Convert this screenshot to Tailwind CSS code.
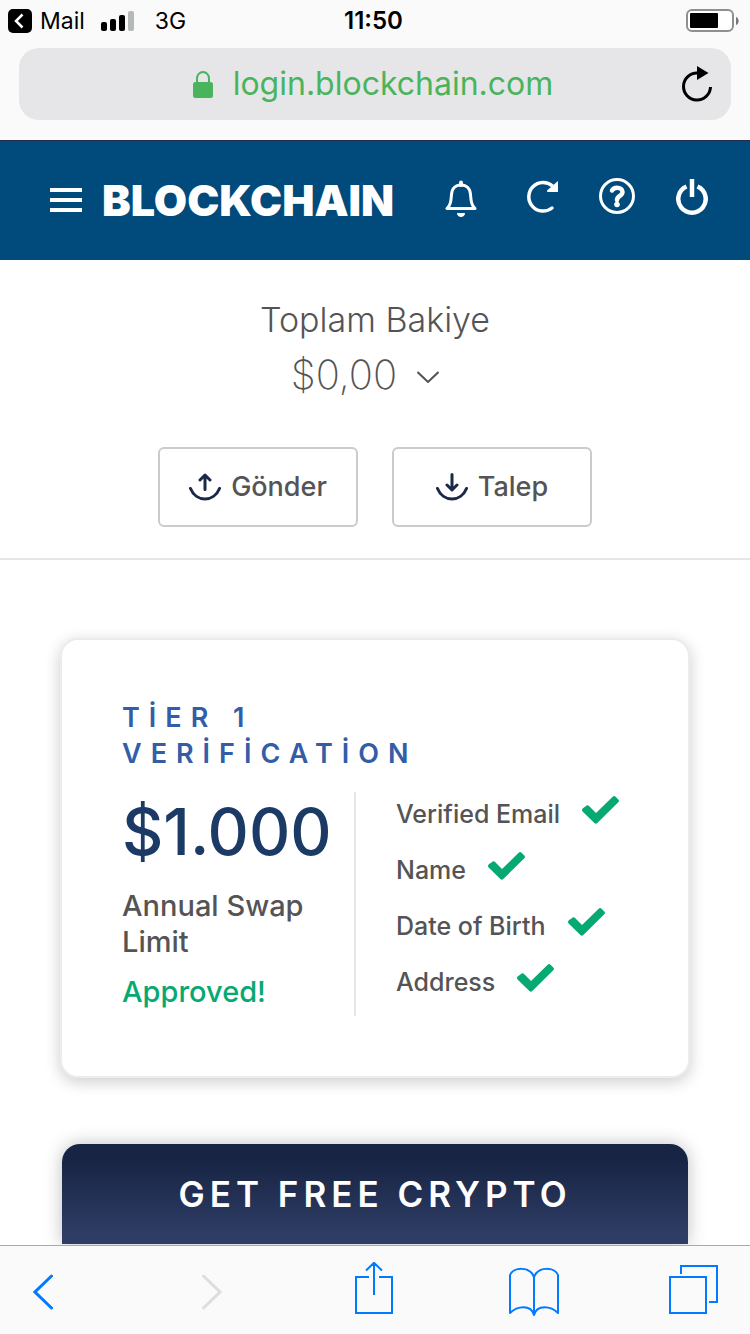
<!DOCTYPE html>
<html lang="tr">
  <head>
    <meta charset="utf-8" />
    <meta name="viewport" content="width=device-width, initial-scale=1" />
    <title>Blockchain Wallet</title>
    <script src="https://cdn.jsdelivr.net/npm/@tailwindcss/browser@4"></script>
  </head>
  <body class="flex flex-col min-h-screen bg-white text-[#545456] font-['Inter','Open_Sans',sans-serif]">
    <!-- Browser chrome -->
    <div class="bg-[#fafafa] text-black pb-5">
      <div class="grid grid-cols-3 items-center h-12 pb-1.5 pl-2 pr-[11px] text-[23px] leading-7">
        <div class="flex items-center">
          <svg class="w-6 h-6 mr-2" viewBox="0 0 24 24">
            <rect width="24" height="24" rx="5" />
            <path d="M14.5 5.5L8 12l6.500 6.500" fill="none" stroke="#fff" stroke-width="2.500" />
          </svg>
          <span>Mail</span>
          <svg class="w-[34px] h-5 ml-4 mr-5" viewBox="0 0 34 20">
            <rect x="0" y="11" width="6" height="9" rx="2" />
            <rect x="9" y="8" width="6" height="12" rx="2" />
            <rect x="18" y="4" width="6" height="16" rx="2" />
            <rect x="27" y="0" width="6" height="20" rx="2" fill="#b5b9b9" />
          </svg>
          <span>3G</span>
        </div>
        <span class="text-center text-2xl leading-7 font-semibold">11:50</span>
        <svg class="w-[53px] h-6 justify-self-end" viewBox="0 0 53 24">
          <rect x="1" y="1" width="46" height="21" rx="5" fill="#fff" stroke="#8e8e93" stroke-width="2" />
          <rect x="4" y="4" width="28" height="15" rx="1" />
          <path d="M50 8c3.500 1 3.500 7 0 8z" fill="#77777c" />
        </svg>
      </div>
      <div class="flex items-center h-18 mx-[19px] px-[18px] rounded-[20px] bg-[#e6e6e8]">
        <a href="#" class="flex flex-1 items-center justify-center pl-7 text-[32px] leading-10 text-[#4ab45d]">
          <svg class="w-5 h-[27px] mr-5" viewBox="0 0 20 27">
            <rect y="11" width="20" height="16" rx="2.500" fill="#4ab45d" />
            <path d="M4 12V7.500a6 6.500 0 0 1 12 0V12" fill="none" stroke="#4ab45d" stroke-width="2" />
          </svg>
          <span>login.blockchain.com</span>
        </a>
        <button type="button" aria-label="Reload">
          <svg class="w-8 h-9" viewBox="0 0 32 36">
            <path d="M16.500 7A13.500 13.500 0 1 0 29.500 21" fill="none" stroke="#000" stroke-width="3" />
            <path d="M16 0l11.500 7L16 14z" />
          </svg>
        </button>
      </div>
    </div>

    <!-- Wallet header -->
    <header class="flex items-center h-30 pb-0.5 pl-[50px] pr-[42px] border-t border-[#1f2c50] bg-[#004a7c] text-white">
      <button type="button" aria-label="Menu">
        <svg class="w-8 h-6" viewBox="0 0 32 24" fill="#fff">
          <path d="M0 0h32v4H0zM0 10h32v4H0zM0 20h32v4H0z" />
        </svg>
      </button>
      <a href="#" class="ml-5 text-[43px] leading-12 font-black">BLOCKCHAIN</a>
      <div class="flex items-center gap-[41px] ml-auto">
        <button type="button" class="mr-2" aria-label="Notifications">
          <svg class="w-8 h-11" viewBox="0 0 32 44" fill="none" stroke="#fff" stroke-width="3">
            <path d="M2 30.500h28c-3.500-3.500-4-7-4.500-14C25.200 10.500 21.500 7 16 7S6.800 10.500 6.500 16.500C6 23.500 5.500 27 2 30.500z" stroke-linejoin="round" />
            <path d="M16 4.500V7" stroke-width="4" stroke-linecap="round" />
            <path d="M12 35h8c0 5.300-8 5.300-8 0z" fill="#fff" stroke="none" />
          </svg>
        </button>
        <button type="button" aria-label="Refresh">
          <svg class="w-8 h-11" viewBox="0 0 32 44" fill="none">
            <path d="M26.500 8A14.300 14.300 0 1 0 26 30" stroke="#fff" stroke-width="3.500" stroke-linecap="round" />
            <path d="M32 3v11H22c-1.200 0-1.400-1-.7-1.700z" fill="#fff" />
          </svg>
        </button>
        <button type="button" aria-label="Help">
          <svg class="w-9 h-11" viewBox="0 0 36 44" fill="none" stroke="#fff">
            <circle cx="18" cy="18" r="16.500" stroke-width="3" />
            <path d="M13 12.500c1-2 2.700-2.800 5-2.800 3 0 5.500 1.500 5.500 4.300 0 4-5.500 3.800-5.500 8" stroke-width="4.500" stroke-linecap="round" />
            <circle cx="18" cy="26.500" r="2.800" fill="#fff" stroke="none" />
          </svg>
        </button>
        <button type="button" aria-label="Log out">
          <svg class="w-8 h-11" viewBox="0 0 32 44" fill="none" stroke="#fff">
            <path d="M10.500 8.500A13.700 13.700 0 1 0 21.500 8.500" stroke-width="4.500" />
            <path d="M16 1v18" stroke-width="4.500" />
          </svg>
        </button>
      </div>
    </header>

    <main class="flex-1">
      <!-- Balance -->
      <section class="pt-10 pb-[31px] border-b-2 border-[#e6e6e8] text-center">
        <h1 class="text-[34px] leading-10 font-light">Toplam Bakiye</h1>
        <button type="button" class="flex items-center h-[70px] mx-auto pr-5 text-[40px] font-extralight">
          $0,00
          <svg class="w-[22px] h-3 ml-5 mt-1" viewBox="0 0 22 12" fill="none" stroke="#545456" stroke-width="2">
            <path d="M.5 1L11 11 21.500 1" />
          </svg>
        </button>
        <div class="flex justify-center gap-[34px] mt-[37px]">
          <button type="button" class="flex items-center justify-center gap-2.5 w-50 h-20 border-2 border-[#c9cccb] rounded-md text-[27px] font-medium">
            <svg class="w-8 h-7" viewBox="0 0 32 28" fill="none" stroke="#1a2849" stroke-width="3" stroke-linecap="round" stroke-linejoin="round">
              <path d="M1.500 15.500C7 29.500 25 29.500 30.500 15.500M16 16.500V2M11 7l5-5 5 5" />
            </svg>
            Gönder
          </button>
          <button type="button" class="flex items-center justify-center gap-2.5 w-50 h-20 border-2 border-[#c9cccb] rounded-md text-[27px] font-medium">
            <svg class="w-8 h-7" viewBox="0 0 32 28" fill="none" stroke="#1a2849" stroke-width="3" stroke-linecap="round" stroke-linejoin="round">
              <path d="M1.500 15.500C7 29.500 25 29.500 30.500 15.500M16 1.500V16.500M11 12l5 5 5-5" />
            </svg>
            Talep
          </button>
        </div>
      </section>

      <div class="px-[60px] pt-[78px]">
        <!-- Tier card -->
        <section class="p-[60px] border-2 border-[#ececee] rounded-[18px] bg-white shadow-[0_4px_16px_rgba(0,0,0,0.2)]">
          <h2 class="text-[27px] leading-9 font-semibold tracking-[9px] text-[#345da8]">TİER 1<br />VERİFİCATİON</h2>
          <div class="flex mt-5">
            <div class="w-[232px]">
              <p class="text-[64px] leading-20 font-medium text-[#1b3a66]">$1.000</p>
              <p class="mt-4 text-[29px] leading-9 font-medium">Annual Swap<br />Limit</p>
              <p class="mt-3.5 text-[29px] leading-9 font-medium text-[#06a972]">Approved!</p>
            </div>
            <ul class="flex-1 pl-10 border-l-2 border-[#e6e6e8] text-[25px] font-medium">
              <li class="flex gap-[22px] h-14 pt-1">
                <span class="leading-9">Verified Email</span>
                <svg class="w-[37px] h-7" viewBox="0 0 37 28" fill="#06a972"><path d="M.6 12.500L4.400 9.700c.8-.6 1.700-.6 2.400.1L14 17 30.700.7c.9-.8 2-.8 2.900 0l2.700 2.700c.9.9.9 2 0 2.900L15.300 27c-.9.900-2 .9-2.900 0L.6 15.600c-.8-.8-.8-2.300 0-3.100z" /></svg>
              </li>
              <li class="flex gap-[22px] h-14 pt-1">
                <span class="leading-9">Name</span>
                <svg class="w-[37px] h-7" viewBox="0 0 37 28" fill="#06a972"><path d="M.6 12.500L4.400 9.700c.8-.6 1.700-.6 2.400.1L14 17 30.700.7c.9-.8 2-.8 2.900 0l2.700 2.700c.9.9.9 2 0 2.900L15.300 27c-.9.900-2 .9-2.900 0L.6 15.600c-.8-.8-.8-2.300 0-3.100z" /></svg>
              </li>
              <li class="flex gap-[22px] h-14 pt-1">
                <span class="leading-9">Date of Birth</span>
                <svg class="w-[37px] h-7" viewBox="0 0 37 28" fill="#06a972"><path d="M.6 12.500L4.400 9.700c.8-.6 1.700-.6 2.400.1L14 17 30.700.7c.9-.8 2-.8 2.900 0l2.700 2.700c.9.9.9 2 0 2.900L15.300 27c-.9.900-2 .9-2.900 0L.6 15.600c-.8-.8-.8-2.300 0-3.100z" /></svg>
              </li>
              <li class="flex gap-[22px] h-14 pt-1">
                <span class="leading-9">Address</span>
                <svg class="w-[37px] h-7" viewBox="0 0 37 28" fill="#06a972"><path d="M.6 12.500L4.400 9.700c.8-.6 1.700-.6 2.400.1L14 17 30.700.7c.9-.8 2-.8 2.900 0l2.700 2.700c.9.9.9 2 0 2.900L15.300 27c-.9.900-2 .9-2.900 0L.6 15.600c-.8-.8-.8-2.300 0-3.100z" /></svg>
              </li>
            </ul>
          </div>
        </section>

        <!-- Promo banner -->
        <section class="mx-0.5 mt-[66px] mb-px py-[26px] rounded-t-[18px] bg-linear-to-b from-[#172443] from-15% to-[#2f3d66] to-90% shadow-[0_0_18px_rgba(0,0,0,0.25)] text-center text-white">
          <h2 class="text-[35px] leading-12 font-semibold tracking-[5px]">GET FREE CRYPTO</h2>
        </section>
      </div>
    </main>

    <!-- Browser toolbar -->
    <nav class="sticky bottom-0 flex items-center justify-between h-[89px] pl-[11px] pr-[31px] border-t border-[#a9a9ab] bg-[#fafafa]">
      <button type="button" class="flex justify-center w-16" aria-label="Back">
        <svg class="w-5 h-14" viewBox="0 0 20 56" fill="none" stroke="#007aff" stroke-width="3" stroke-linecap="round"><path d="M18.500 14L2 30l16.500 16" /></svg>
      </button>
      <button type="button" class="flex justify-center w-[54px]" aria-label="Forward" disabled>
        <svg class="w-5 h-14" viewBox="0 0 20 56" fill="none" stroke="#dcdde0" stroke-width="3" stroke-linecap="round"><path d="M1.500 14L18 30 1.500 46" /></svg>
      </button>
      <button type="button" class="flex justify-center w-[50px]" aria-label="Share">
        <svg class="w-[38px] h-14" viewBox="0 0 38 56" fill="none" stroke="#007aff" stroke-width="2"><path d="M14 15H1v36h36V15H24M19 33V1M11 8.500L19 .8l8 7.700" /></svg>
      </button>
      <button type="button" class="flex justify-center w-[50px]" aria-label="Bookmarks">
        <svg class="w-[50px] h-14" viewBox="0 0 50 56" fill="none" stroke="#007aff" stroke-width="2" stroke-linejoin="round"><path d="M25 15C21 4 4 5 1 13v38c7-7 21-9 24 2 3-11 17-9 24-2V13C46 5 29 4 25 15zV53" /></svg>
      </button>
      <button type="button" class="flex justify-center w-[50px]" aria-label="Tabs">
        <svg class="w-[50px] h-14" viewBox="0 0 50 56" fill="none" stroke="#007aff" stroke-width="2"><path d="M1 15h36v36H1zM12 12V4h36v36h-8" /></svg>
      </button>
    </nav>
  </body>
</html>
